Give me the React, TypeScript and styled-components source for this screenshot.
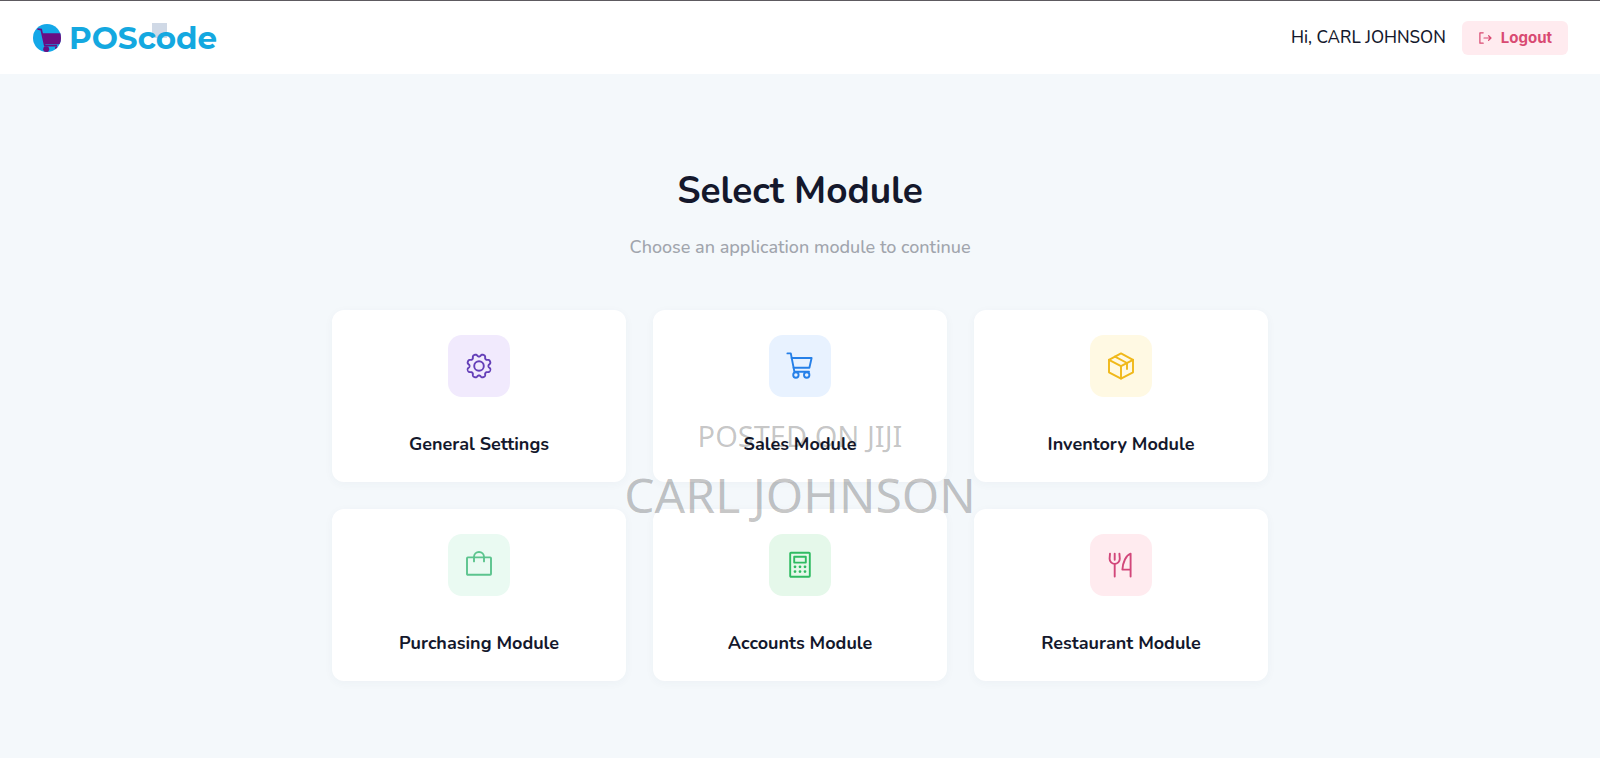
import React from "react";
import styled, { createGlobalStyle } from "styled-components";

const GlobalStyle = createGlobalStyle`
  *, *::before, *::after { box-sizing: border-box; }
  body {
    margin: 0;
    background: #f4f8fb;
    color: #14182c;
    font-family: Nunito, Lato, "Noto Sans", sans-serif;
  }
`;

const Page = styled.div`
  position: relative;
  min-height: 100vh;
`;

const Header = styled.header`
  display: flex;
  align-items: center;
  justify-content: space-between;
  height: 74px;
  padding: 0 32px;
  background: #fff;
  border-top: 1px solid #5d5a60;
`;

const Brand = styled.a`
  display: flex;
  align-items: center;
  gap: 7px;
  color: #14a8e0;
  text-decoration: none;
`;

const BrandName = styled.span`
  position: relative;
  z-index: 0;
  font-family: Montserrat, Lato, sans-serif;
  font-size: 31px;
  font-weight: 700;
  line-height: 36px;

  &::before {
    content: "";
    position: absolute;
    z-index: -1;
    top: 3px;
    right: 50px;
    width: 15px;
    height: 15px;
    background: #d0d9e6;
  }
`;

const Account = styled.div`
  display: flex;
  align-items: center;
  gap: 16px;
`;

const Greeting = styled.span`
  font-size: 17px;
  font-weight: 500;
  line-height: 24px;
`;

const LogoutButton = styled.button`
  display: flex;
  align-items: center;
  gap: 8px;
  height: 34px;
  padding: 0 16px;
  border: 0;
  border-radius: 6px;
  background: #ffebef;
  color: #d94a72;
  font-family: Inter, sans-serif;
  font-size: 15px;
  font-weight: 700;
  cursor: pointer;
`;

const Main = styled.main`
  max-width: 968px;
  margin: 0 auto;
  padding: 89px 16px 64px;
`;

const Title = styled.h1`
  margin: 0;
  font-size: 37px;
  font-weight: 700;
  line-height: 56px;
  text-align: center;
`;

const Subtitle = styled.p`
  margin: 15px 0 50px;
  color: #a1a5ad;
  font-size: 18px;
  font-weight: 500;
  line-height: 26px;
  text-align: center;
`;

const Modules = styled.nav`
  display: grid;
  grid-template-columns: repeat(3, 1fr);
  gap: 27px;
`;

const Card = styled.a`
  display: flex;
  flex-direction: column;
  align-items: center;
  gap: 34px;
  padding: 25px 16px;
  border-radius: 12px;
  background: #fff;
  box-shadow: 0 2px 10px rgba(40, 70, 100, 0.04);
  color: inherit;
  text-decoration: none;
`;

const Tile = styled.span<{ $bg: string; $fg: string }>`
  display: grid;
  place-items: center;
  width: 62px;
  height: 62px;
  border-radius: 14px;
  background: ${(p) => p.$bg};
  color: ${(p) => p.$fg};
`;

const CardLabel = styled.span`
  font-size: 18px;
  font-weight: 700;
  line-height: 26px;
`;

const Watermark = styled.div`
  position: absolute;
  top: 414px;
  left: 0;
  right: 0;
  display: flex;
  flex-direction: column;
  align-items: center;
  color: rgba(0, 0, 0, 0.23);
  font-family: "Noto Sans", sans-serif;
  pointer-events: none;
`;

const PostedOn = styled.span`
  font-size: 29px;
  line-height: 44px;
`;

const Poster = styled.span`
  font-size: 48px;
  line-height: 74px;
`;

const Glyph = styled.svg`
  display: block;
  fill: none;
  stroke: currentColor;
  stroke-width: 1.9;
  stroke-linecap: round;
  stroke-linejoin: round;
`;

const gearPath =
  Array.from({ length: 240 }, (_, i) => {
    const angle = (i * Math.PI) / 120;
    const r = 10.6 - 1.4 * Math.tanh(1.5 * Math.cos(8 * angle) - 0.35);
    const x = 14 + r * Math.sin(angle);
    const y = 14 - r * Math.cos(angle);
    return `${i ? "L" : "M"}${x.toFixed(2)} ${y.toFixed(2)}`;
  }).join("") + "Z";

const modules = [
  {
    name: "General Settings",
    bg: "#f1eafd",
    fg: "#643fb8",
    icon: (
      <>
        <path d={gearPath} />
        <circle cx="14" cy="14" r="4.8" />
      </>
    ),
  },
  {
    name: "Sales Module",
    bg: "#e8f2ff",
    fg: "#2680e8",
    icon: (
      <>
        <path d="M1.4 1.4H4.8L8.4 19.8H23" />
        <path d="M5.6 6H25.6L23.4 15.8H7.6" />
        <circle cx="9.9" cy="23" r="2.7" />
        <circle cx="20.7" cy="23" r="2.7" />
      </>
    ),
  },
  {
    name: "Inventory Module",
    bg: "#fff9e3",
    fg: "#f0b81a",
    icon: (
      <>
        <path d="M14 1.4L26 7.8V20.3L14 26.6L2 20.3V7.8Z" />
        <path d="M2 7.8L14 14.2L26 7.8M14 14.2V26.6" />
        <path d="M8 4.6L20 11V17" />
      </>
    ),
  },
  {
    name: "Purchasing Module",
    bg: "#eafaf2",
    fg: "#5cc48e",
    icon: (
      <>
        <rect x="2" y="6.4" width="24" height="17.4" rx="0.8" />
        <path d="M9 10.4V6A5 5 0 0 1 19 6V10.4" />
      </>
    ),
  },
  {
    name: "Accounts Module",
    bg: "#e5f8ea",
    fg: "#2fbb62",
    icon: (
      <>
        <rect x="4.2" y="1.8" width="19.6" height="24" rx="0.8" />
        <rect x="8.2" y="5.8" width="11.6" height="5.8" />
        <path
          d="M9 15.8h.01M14 15.8h.01M19 15.8h.01M9 20.6h.01M14 20.6h.01M19 20.6h.01"
          strokeWidth="2.8"
        />
      </>
    ),
  },
  {
    name: "Restaurant Module",
    bg: "#ffebef",
    fg: "#d2477a",
    icon: (
      <>
        <path d="M3 2.6L2.6 7.8A5.1 5.1 0 0 0 12.8 7.8L12.4 2.6" />
        <path d="M7.7 2.6V8.8M7.7 13V25.6" />
        <path d="M23.6 25.6V2.6C19 4.2 15.8 11.3 15.4 18.6H23.6" />
      </>
    ),
  },
];

function LogoMark() {
  return (
    <svg width="30" height="30" viewBox="0 0 30 30" aria-hidden="true">
      <defs>
        <clipPath id="disc">
          <circle cx="15" cy="15" r="14" />
        </clipPath>
      </defs>
      <circle cx="15" cy="15" r="14" fill="#14a8e8" />
      <g clipPath="url(#disc)">
        <path d="M10.6 10.2H30V20.4L28 21.2H12.6Z" fill="#6a0d83" />
        <path
          d="M5.4 6L9.2 6.6L12.8 22.6H25"
          fill="none"
          stroke="#6a0d83"
          strokeWidth="1.7"
        />
        <circle cx="14.2" cy="26.2" r="3" fill="#6a0d83" />
        <circle cx="24.4" cy="25" r="1.4" fill="#6a0d83" />
      </g>
    </svg>
  );
}

export default function App() {
  return (
    <Page>
      <GlobalStyle />
      <Header>
        <Brand href="#">
          <LogoMark />
          <BrandName>POScode</BrandName>
        </Brand>
        <Account>
          <Greeting>Hi, CARL JOHNSON</Greeting>
          <LogoutButton type="button">
            <Glyph width="15" height="14" viewBox="0 0 15 14" aria-hidden="true">
              <path
                d="M5.2 1.8H1.9V12.2H5.2M6 7H13M10.6 4.7L13 7L10.6 9.3"
                strokeWidth="1.2"
              />
            </Glyph>
            Logout
          </LogoutButton>
        </Account>
      </Header>
      <Main>
        <Title>Select Module</Title>
        <Subtitle>Choose an application module to continue</Subtitle>
        <Modules>
          {modules.map((m) => (
            <Card href="#" key={m.name}>
              <Tile $bg={m.bg} $fg={m.fg}>
                <Glyph width="28" height="28" viewBox="0 0 28 28" aria-hidden="true">
                  {m.icon}
                </Glyph>
              </Tile>
              <CardLabel>{m.name}</CardLabel>
            </Card>
          ))}
        </Modules>
      </Main>
      <Watermark>
        <PostedOn>POSTED ON JIJI</PostedOn>
        <Poster>CARL JOHNSON</Poster>
      </Watermark>
    </Page>
  );
}
